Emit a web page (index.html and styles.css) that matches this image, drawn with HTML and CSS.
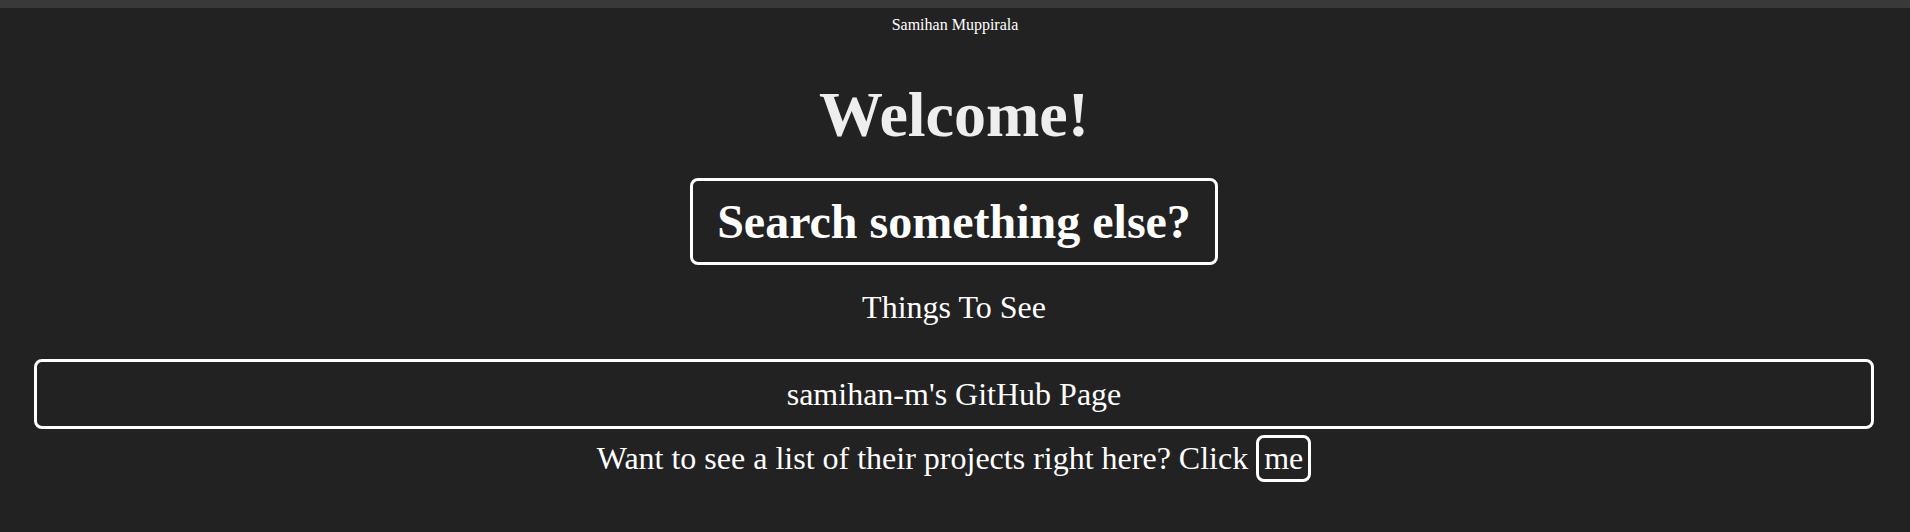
FILE: index.html
```html
<!DOCTYPE html>
<html lang="en">
<head>
<meta charset="utf-8">
<title>Samihan Muppirala</title>
<link rel="stylesheet" href="styles.css">
</head>
<body>
<div class="topbar"></div>
<div class="header">Samihan Muppirala</div>
<main class="main">
  <h1 class="welcome">Welcome!</h1>
  <div class="search-row"><button class="search-btn">Search something else?</button></div>
  <div class="section-title">Things To See</div>
  <div class="card">samihan-m's GitHub Page</div>
  <p class="projects">Want to see a list of their projects right here? Click <button class="me-btn">me</button></p>
</main>
</body>
</html>
```
FILE: styles.css
```css
html, body {
  margin: 0;
  padding: 0;
  background: #222222;
  color: #ffffff;
  font-family: "Liberation Serif", "Times New Roman", serif;
}

.topbar {
  height: 8px;
  background: #393939;
}

.header {
  margin-top: 8px;
  font-size: 16px;
  text-align: center;
  color: #ffffff;
}

.main {
  padding: 0 36px 0 34px;
  text-align: center;
}

.welcome {
  margin: 44px 0 0 0;
  font-size: 64px;
  font-weight: bold;
  color: #eeeeee;
  line-height: normal;
}

.search-row {
  margin-top: 26px;
}

.search-btn {
  font-family: "Liberation Serif", "Times New Roman", serif;
  font-size: 48px;
  font-weight: bold;
  color: #ffffff;
  background: transparent;
  border: 3px solid #ffffff;
  border-radius: 8px;
  padding: 13px 24px;
  margin: 0;
  line-height: normal;
  cursor: pointer;
}

.section-title {
  margin-top: 24px;
  font-size: 32px;
}

.card {
  margin-top: 33px;
  border: 3px solid #ffffff;
  border-radius: 8px;
  padding: 14px 0;
  font-size: 32px;
  line-height: 36px;
}

.projects {
  margin: 6px 0 0 0;
  font-size: 32px;
}

.me-btn {
  font-family: "Liberation Serif", "Times New Roman", serif;
  font-size: 32px;
  color: #ffffff;
  background: transparent;
  border: 3px solid #ffffff;
  border-radius: 8px;
  padding: 2px 5px;
  margin: 0;
  line-height: normal;
  cursor: pointer;
}
```
